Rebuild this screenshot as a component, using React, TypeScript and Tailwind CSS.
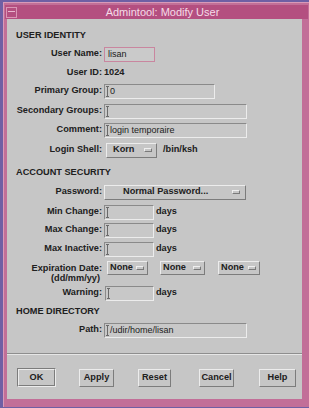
import React from 'react'

const sunken =
  'border border-t-[#8a8a8a] border-l-[#8a8a8a] border-b-[#ececec] border-r-[#ececec] bg-[#c8c8c8]'
const raised =
  'border border-t-[#ececec] border-l-[#ececec] border-b-[#7c7c7c] border-r-[#7c7c7c] bg-[#c6c6c6]'

function Caret() {
  return (
    <svg width="3" height="11" className="shrink-0 ml-[1px]">
      <path d="M0 0.5H3M1.5 0V11M0 10.5H3" stroke="#6a6a6a" strokeWidth="1" />
    </svg>
  )
}

function Indicator() {
  return (
    <span className="inline-block w-[8px] h-[4px] border border-t-[#efefef] border-l-[#efefef] border-b-[#7a7a7a] border-r-[#7a7a7a] bg-[#c6c6c6]" />
  )
}

function Field({ className, value, caret = true }: { className: string; value?: string; caret?: boolean }) {
  return (
    <div className={`h-[15px] flex items-center ${sunken} ${className}`}>
      {caret && <Caret />}
      {value && <span className="ml-[1px] text-[9px] font-normal text-[#222]">{value}</span>}
    </div>
  )
}

function Row({ label, className, children }: { label: string; className: string; children?: React.ReactNode }) {
  return (
    <div className={`flex items-center h-[18px] ${className}`}>
      <div className="w-[95px] text-right font-bold">{label}</div>
      <div className="ml-[2px] flex items-center">{children}</div>
    </div>
  )
}

function Header({ text, className }: { text: string; className: string }) {
  return (
    <div className={`h-[14px] flex items-center pl-[9px] font-bold ${className}`}>{text}</div>
  )
}

function Option({ text, className }: { text: string; className: string }) {
  return (
    <div className={`h-[14px] flex items-center justify-between pl-[2px] pr-[3px] ${raised} ${className}`}>
      <span className="font-bold">{text}</span>
      <Indicator />
    </div>
  )
}

function Btn({ text, className }: { text: string; className: string }) {
  return (
    <div className={`h-[18px] flex items-center justify-center font-bold ${raised} ${className}`}>{text}</div>
  )
}

export default function App() {
  return (
    <div className="w-[309px] h-[408px] bg-[#6f5fa4] pt-[2px] pl-[3px] overflow-hidden font-['Liberation_Sans',Arial,sans-serif] text-[9.2px] text-[#202020] leading-none">
      <div className="w-[306px] h-[405px] bg-[#c26f98] px-[1px] pt-[2px] border-t border-l border-[#d99ab8]">
        {/* title bar */}
        <div className="h-[14px] flex items-center bg-[#b44f80]">
          <div className="ml-[1px] w-[11px] h-[11px] border border-[#d996b6] flex items-start pt-[3px] pl-[1px]">
            <div className="w-[7px] h-[1px] bg-[#e8b8cf]" />
          </div>
          <div className="flex-1 text-center text-[11px] text-[#f4dce8]">Admintool: Modify User</div>
        </div>

        {/* body */}
        <div className="ml-[2px] w-[295px] h-[380px] bg-[#c6c6c6] flex flex-col">
          <Header text="USER IDENTITY" className="mt-[10px]" />
          <Row label="User Name:" className="mt-[2px]">
            <div className="w-[51px] h-[15px] flex items-center border border-[#c9869f] bg-[#cacaca]">
              <span className="ml-[3px] text-[9px] font-normal">lisan</span>
            </div>
          </Row>
          <Row label="User ID:" className="mt-[1px]">
            <span className="font-bold">1024</span>
          </Row>
          <Row label="Primary Group:" className="mt-0">
            <Field className="w-[111px]" value="0" />
          </Row>
          <Row label="Secondary Groups:" className="mt-[2px]">
            <Field className="w-[143px]" />
          </Row>
          <Row label="Comment:" className="mt-[1px]">
            <Field className="w-[143px]" value="login temporaire" />
          </Row>
          <Row label="Login Shell:" className="mt-[2px]">
            <div className={`ml-[2px] w-[51px] h-[15px] flex items-center ${raised}`}>
              <span className="ml-[6px] font-bold">Korn</span>
              <span className="ml-[10px]"><Indicator /></span>
            </div>
            <span className="ml-[6px] font-bold">/bin/ksh</span>
          </Row>

          <Header text="ACCOUNT SECURITY" className="mt-[7px]" />
          <Row label="Password:" className="mt-[3px]">
            <div className={`w-[142px] h-[15px] flex items-center ${raised}`}>
              <span className="ml-[18px] font-bold">Normal Password...</span>
              <span className="ml-auto mr-[5px]"><Indicator /></span>
            </div>
          </Row>
          <Row label="Min Change:" className="mt-[2px]">
            <Field className="w-[50px]" />
            <span className="ml-[2px] font-bold">days</span>
          </Row>
          <Row label="Max Change:" className="mt-0">
            <Field className="w-[50px]" />
            <span className="ml-[2px] font-bold">days</span>
          </Row>
          <Row label="Max Inactive:" className="mt-[1px]">
            <Field className="w-[50px]" />
            <span className="ml-[2px] font-bold">days</span>
          </Row>

          <div className="mt-[1px] h-[24px] flex items-start">
            <div className="w-[95px] pt-[4px] flex flex-col items-end font-bold leading-[10px]">
              <span>Expiration Date:</span>
              <span className="mr-[2px]">(dd/mm/yy)</span>
            </div>
            <div className="mt-[2px] ml-[5px] flex items-center">
              <Option text="None" className="w-[41px]" />
              <Option text="None" className="ml-[12px] w-[45px]" />
              <Option text="None" className="ml-[13px] w-[42px]" />
            </div>
          </div>
          <Row label="Warning:" className="mt-[1px]">
            <Field className="ml-[1px] w-[49px]" />
            <span className="ml-[2px] font-bold">days</span>
          </Row>

          <Header text="HOME DIRECTORY" className="mt-[3px]" />
          <Row label="Path:" className="mt-[2px]">
            <Field className="w-[143px]" value="/udir/home/lisan" />
          </Row>

          <div className="mt-[14px] h-[1px] bg-[#8e8e8e]" />
          <div className="h-[1px] bg-[#e6e6e6]" />

          <div className="mt-[13px] flex items-center">
            <div className="ml-[10px] w-[39px] h-[19px] border border-t-[#7c7c7c] border-l-[#7c7c7c] border-b-[#ececec] border-r-[#ececec] flex">
              <Btn text="OK" className="w-full h-full" />
            </div>
            <Btn text="Apply" className="ml-[23px] w-[35px]" />
            <Btn text="Reset" className="ml-[24px] w-[33px]" />
            <Btn text="Cancel" className="ml-[28px] w-[35px]" />
            <Btn text="Help" className="ml-[25px] w-[37px]" />
          </div>
        </div>
      </div>
    </div>
  )
}
